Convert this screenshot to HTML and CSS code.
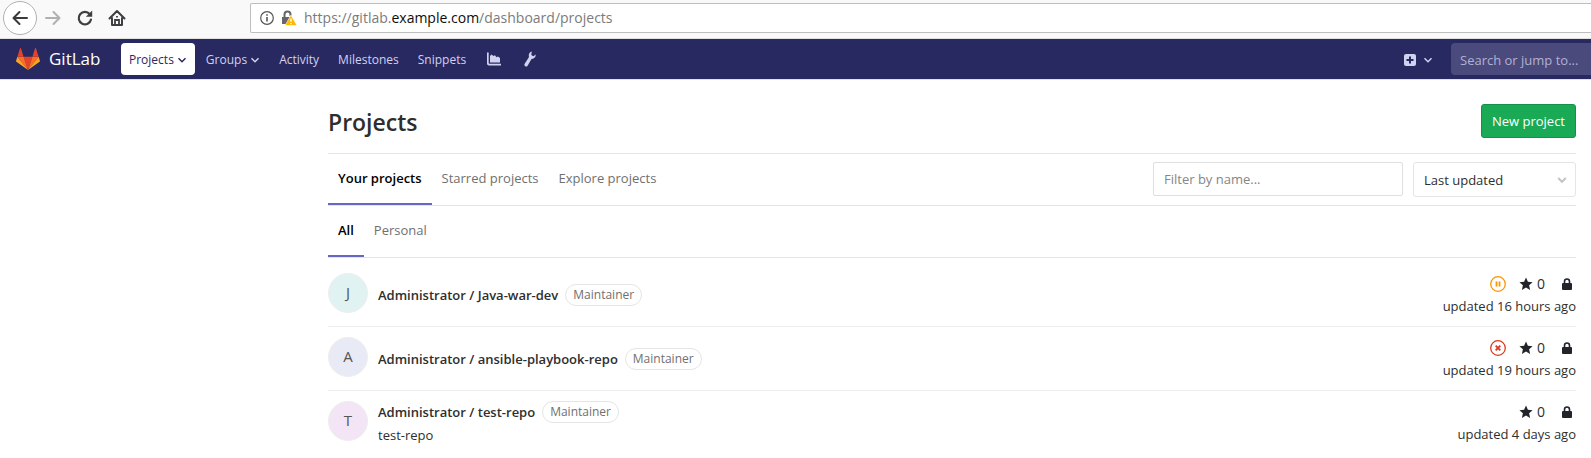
FILE: index.html
```html
<!DOCTYPE html>
<html lang="en">
<head>
<meta charset="utf-8">
<title>Projects · Dashboard · GitLab</title>
<link rel="stylesheet" href="styles.css">
</head>
<body>
<div class="browser-bar">
  <button class="browser-btn back" aria-label="Back"><svg width="18" height="18" viewBox="0 0 18 18"><path d="M16 9H3M8.500 3 2.500 9l6 6" fill="none" stroke="#3a3a3c" stroke-width="2" stroke-linecap="round" stroke-linejoin="round"/></svg></button>
  <button class="browser-btn" aria-label="Forward"><svg width="18" height="18" viewBox="0 0 18 18"><path d="M2 9h13M9.500 3l6 6-6 6" fill="none" stroke="#b0b0b1" stroke-width="2" stroke-linecap="round" stroke-linejoin="round"/></svg></button>
  <button class="browser-btn" aria-label="Reload"><svg width="18" height="18" viewBox="0 0 18 18"><path d="M13.800 5.300A6.200 6.200 0 1 0 15 10.500" fill="none" stroke="#3f3f41" stroke-width="2.200" stroke-linecap="round"/><path d="M16.200 1.500v6.300H9.900z" fill="#3f3f41"/></svg></button>
  <button class="browser-btn" aria-label="Home"><svg width="18" height="18" viewBox="0 0 18 18"><path d="M1.500 9.500 9 2l7.500 7.500M4 9v7h10V9" fill="none" stroke="#3f3f41" stroke-width="2" stroke-linecap="round" stroke-linejoin="round"/><path d="M7 16v-5h4v5M9 7v1.500" fill="none" stroke="#3f3f41" stroke-width="1.800"/></svg></button>
  <div class="address">
    <svg width="14" height="14" viewBox="0 0 14 14"><circle cx="7" cy="7" r="6.300" fill="none" stroke="#555" stroke-width="1.200"/><path d="M7 6v4.500M7 3.300v1.500" stroke="#555" stroke-width="1.600"/></svg>
    <svg width="16" height="16" viewBox="0 0 16 16"><path d="M3.500 8V4.500a3 3 0 0 1 6 0V6" fill="none" stroke="#666" stroke-width="2"/><path d="M1 7h10v7H1z" fill="#666"/><path d="M10 5 16 15.500H4z" fill="#ffb800" stroke="#fff" stroke-width=".6"/><path d="M10 8.500v3.300M10 13v1.300" stroke="#fff" stroke-width="1.400"/></svg>
    <span class="url">https://gitlab.<span class="host">example.com</span>/dashboard/projects</span>
  </div>
</div>

<header class="navbar">
  <a class="brand" href="#">
    <svg width="24" height="22" viewBox="0 0 36 33"><path fill="#e24329" d="M18 33 24.600 13H11.400z"/><path fill="#fc6d26" d="M18 33 11.400 13H2.100zM18 33l6.600-20h9.300z"/><path fill="#fca326" d="M2.100 13 .1 19.100a1.400 1.400 0 0 0 .5 1.500L18 33zM33.900 13l2 6.100a1.400 1.400 0 0 1-.5 1.500L18 33z"/><path fill="#e24329" d="M2.100 13h9.300L7.400.5a.7.7 0 0 0-1.300 0zM33.900 13h-9.300l4-12.500a.7.7 0 0 1 1.300 0z"/></svg>
    <span>GitLab</span>
  </a>
  <nav class="nav-links">
    <button class="nav-item active">Projects <svg width="10" height="10" viewBox="0 0 10 10"><path d="m1.500 3.200 3.500 3.500 3.500-3.500"/></svg></button>
    <button class="nav-item">Groups <svg width="10" height="10" viewBox="0 0 10 10"><path d="m1.500 3.200 3.500 3.500 3.500-3.500"/></svg></button>
    <a class="nav-item" href="#">Activity</a>
    <a class="nav-item" href="#">Milestones</a>
    <a class="nav-item" href="#">Snippets</a>
    <a class="nav-item icon" href="#" aria-label="Instance statistics"><svg width="14" height="14" viewBox="0 0 14 14"><path d="M0 .5h1.700v10.500a.8.800 0 0 0 .8.800H14v1.700H2A2 2 0 0 1 0 11.500zM3 10.500V4L4.500 2.500l2 1.500L8 3.200l1.500 2 1.500-.7 2 1.500v4.500z"/></svg></a>
    <a class="nav-item icon" href="#" aria-label="Admin area"><svg width="12" height="16" viewBox="0 0 12 16"><path d="M7.800.6C5.400 1.200 4.200 3.600 5 6L.7 12.800a1.700 1.700 0 0 0 2.900 1.900L7.500 8c2.500.2 4.500-1.800 4.200-4.400L9.400 5.200 7.300 4z"/></svg></a>
  </nav>
  <button class="nav-item new" aria-label="New"><svg width="12" height="12" viewBox="0 0 12 12"><rect width="12" height="12" rx="2" fill="currentColor" stroke="none"/><path d="M6 2.500v7M2.500 6h7" stroke="#292961" stroke-width="2"/></svg><svg width="10" height="10" viewBox="0 0 10 10"><path d="m1.500 3.200 3.500 3.500 3.500-3.500"/></svg></button>
  <input class="search" type="text" placeholder="Search or jump to..." aria-label="Search or jump to">
</header>

<main class="content">
  <div class="title-row">
    <h1>Projects</h1>
    <button class="new-project">New project</button>
  </div>
  <div class="tab-row">
    <nav class="tabs">
      <a class="tab active" href="#">Your projects</a>
      <a class="tab" href="#">Starred projects</a>
      <a class="tab" href="#">Explore projects</a>
    </nav>
    <div class="filters">
      <input class="filter" type="text" placeholder="Filter by name..." aria-label="Filter by name">
      <div class="sort">
        <select aria-label="Sort by"><option>Last updated</option></select>
        <svg width="10" height="8" viewBox="0 0 10 8"><path d="m1.200 2 3.800 3.800L8.800 2" fill="none" stroke="#c4c4c4" stroke-width="2"/></svg>
      </div>
    </div>
  </div>
  <div class="tab-row">
    <nav class="tabs">
      <a class="tab active" href="#">All</a>
      <a class="tab" href="#">Personal</a>
    </nav>
  </div>

  <ul class="projects">
    <li class="project">
      <div class="avatar teal">J</div>
      <div class="info"><div class="heading"><a class="name" href="#">Administrator / Java-war-dev</a><span class="role">Maintainer</span></div></div>
      <div class="meta">
        <div class="stats">
          <svg class="status" width="16" height="16" viewBox="0 0 16 16"><circle cx="8" cy="8" r="7.300" fill="none" stroke="#fc9403" stroke-width="1.300"/><path d="M6.500 5.500v5M9.500 5.500v5" stroke="#fc9403" stroke-width="1.800"/></svg>
          <span class="stars"><svg width="14" height="14" viewBox="0 0 14 14"><path fill="#212529" d="m7 .5 1.900 4.200 4.700.5-3.500 3.100 1 4.600L7 10.600l-4.100 2.300 1-4.600L.4 5.200l4.700-.5z"/></svg>0</span>
          <svg width="10" height="12" viewBox="0 0 10 12"><path d="M2.500 6V3.500a2.500 2.500 0 0 1 5 0V6" fill="none" stroke="#212529" stroke-width="1.600"/><rect y="5" width="10" height="7" rx="1" fill="#212529"/></svg>
        </div>
        <div>updated 16 hours ago</div>
      </div>
    </li>
    <li class="project">
      <div class="avatar indigo">A</div>
      <div class="info"><div class="heading"><a class="name" href="#">Administrator / ansible-playbook-repo</a><span class="role">Maintainer</span></div></div>
      <div class="meta">
        <div class="stats">
          <svg class="status" width="16" height="16" viewBox="0 0 16 16"><circle cx="8" cy="8" r="7.300" fill="none" stroke="#db3b21" stroke-width="1.300"/><path d="m5.700 5.700 4.600 4.600M10.300 5.700l-4.600 4.600" stroke="#db3b21" stroke-width="1.900"/></svg>
          <span class="stars"><svg width="14" height="14" viewBox="0 0 14 14"><path fill="#212529" d="m7 .5 1.900 4.200 4.700.5-3.500 3.100 1 4.600L7 10.600l-4.100 2.300 1-4.600L.4 5.200l4.700-.5z"/></svg>0</span>
          <svg width="10" height="12" viewBox="0 0 10 12"><path d="M2.500 6V3.500a2.500 2.500 0 0 1 5 0V6" fill="none" stroke="#212529" stroke-width="1.600"/><rect y="5" width="10" height="7" rx="1" fill="#212529"/></svg>
        </div>
        <div>updated 19 hours ago</div>
      </div>
    </li>
    <li class="project">
      <div class="avatar purple">T</div>
      <div class="info"><div class="heading"><a class="name" href="#">Administrator / test-repo</a><span class="role">Maintainer</span></div><div class="description">test-repo</div></div>
      <div class="meta">
        <div class="stats">
          <span class="stars"><svg width="14" height="14" viewBox="0 0 14 14"><path fill="#212529" d="m7 .5 1.900 4.200 4.700.5-3.500 3.100 1 4.600L7 10.600l-4.100 2.300 1-4.600L.4 5.200l4.700-.5z"/></svg>0</span>
          <svg width="10" height="12" viewBox="0 0 10 12"><path d="M2.500 6V3.500a2.500 2.500 0 0 1 5 0V6" fill="none" stroke="#212529" stroke-width="1.600"/><rect y="5" width="10" height="7" rx="1" fill="#212529"/></svg>
        </div>
        <div>updated 4 days ago</div>
      </div>
    </li>
  </ul>
</main>
</body>
</html>
```
FILE: styles.css
```css
* { box-sizing: border-box; }
body {
  margin: 0;
  background: #fff;
  color: #2e2e2e;
  font: 13px/20px "Open Sans", "Noto Sans", sans-serif;
}
button, input, select { font: inherit; color: inherit; margin: 0; }
button { border: 0; background: none; padding: 0; cursor: pointer; }
a { color: inherit; text-decoration: none; }
svg { display: block; flex: none; }

.browser-bar {
  display: flex;
  align-items: center;
  height: 39px;
  padding: 0 0 3px 3px;
  background: #f9f9fa;
  border-bottom: 1px solid #e0e0e1;
}
.browser-btn {
  display: grid;
  place-items: center;
  width: 32px;
  height: 32px;
}
.browser-btn.back {
  width: 34px;
  height: 34px;
  border: 1px solid #b1b1b3;
  border-radius: 50%;
  background: #fff;
}
.address {
  display: flex;
  flex: 1;
  align-items: center;
  gap: 7px;
  height: 30px;
  margin-left: 117px;
  padding-left: 9px;
  border: 1px solid #bebebe;
  border-right: 0;
  border-radius: 2px 0 0 2px;
  background: #fff;
}
.url { font-size: 14px; color: #7b7b7b; }
.host { color: #0c0c0d; }

.navbar {
  display: flex;
  align-items: center;
  height: 41px;
  padding-left: 16px;
  background: #292961;
  border-bottom: 1px solid #dfdfe8;
  color: #d1d1f0;
}
.brand {
  display: flex;
  align-items: center;
  gap: 9px;
  width: 105px;
  color: #fff;
  font-size: 17px;
}
.nav-links { display: flex; flex: 1; gap: 3px; }
.nav-item {
  display: flex;
  align-items: center;
  gap: 3px;
  height: 32px;
  padding: 1px 8px 0;
  border-radius: 4px;
  font-size: 12px;
}
.nav-item path { fill: none; stroke: currentColor; stroke-width: 1.500; }
.nav-item.active { background: #fff; color: #292961; }
.nav-item.icon { padding: 0 10px; }
.nav-item.icon path { fill: currentColor; stroke: none; }
.nav-item.new { gap: 7px; margin-right: 10px; }
.nav-item.new rect + path { stroke: #292961; stroke-width: 2; }
.search {
  width: 140px;
  height: 32px;
  padding: 1px 0 0 9px;
  border: 0;
  border-radius: 4px 0 0 4px;
  background: #4a4a7c;
  color: #fff;
}
.search::placeholder { color: #b1b1d4; opacity: 1; }

.content { padding: 24px 15px 0 328px; }
.title-row {
  display: flex;
  justify-content: space-between;
  align-items: flex-start;
  height: 50px;
  border-bottom: 1px solid #e5e5e5;
}
h1 { margin: 0; font-size: 23px; line-height: 36px; font-weight: 600; }
.new-project {
  height: 34px;
  padding: 0 10px;
  border: 1px solid #168f48;
  border-radius: 3px;
  background: #1aaa55;
  color: #fff;
}
.tab-row {
  display: flex;
  justify-content: space-between;
  align-items: flex-start;
  height: 52px;
  border-bottom: 1px solid #e5e5e5;
}
.tabs { display: flex; }
.tab {
  height: 51px;
  padding: 14px 10px 0;
  color: #707070;
}
.tab.active { border-bottom: 2px solid #6666c4; color: #000; font-weight: 600; }
.filters { display: flex; align-items: flex-start; gap: 10px; padding-top: 8px; }
.filter {
  width: 250px;
  height: 34px;
  padding: 0 10px;
  border: 1px solid #dfdfdf;
  border-radius: 2px;
}
.filter::placeholder { color: #868686; opacity: 1; }
.sort { display: grid; align-items: center; }
.sort select, .sort svg { grid-area: 1 / 1; }
.sort select {
  width: 163px;
  height: 35px;
  padding: 0 10px;
  appearance: none;
  border: 1px solid #e5e5e5;
  border-radius: 3px;
  background: #fff;
}
.sort svg { justify-self: end; margin-right: 9px; pointer-events: none; }

.projects { margin: 5px 0 0; padding: 0; list-style: none; }
.project {
  display: flex;
  align-items: center;
  gap: 10px;
  height: 64px;
  padding-bottom: 3px;
  border-bottom: 1px solid #eee;
}
.project:last-child { border-bottom-color: transparent; }
.avatar {
  width: 40px;
  height: 40px;
  border: 1px solid #eee;
  border-radius: 50%;
  text-align: center;
  font-size: 15px;
  line-height: 37px;
  color: #555;
}
.teal { background: #e0f2f1; }
.indigo { background: #e8eaf6; }
.purple { background: #f3e5f5; }
.info { flex: 1; padding-top: 3px; }
.heading { display: flex; align-items: center; gap: 7px; }
.description { margin-top: 2px; }
.name { font-weight: 600; }
.role {
  height: 22px;
  padding: 0 7px;
  border: 1px solid #e5e5e5;
  border-radius: 11px;
  font-size: 12px;
  color: #707070;
}
.meta { padding-top: 3px; text-align: right; line-height: 22px; }
.stats { display: flex; align-items: center; justify-content: flex-end; gap: 17px; padding-right: 4px; }
.status { margin-right: -4px; }
.stars { display: flex; align-items: center; gap: 4px; font-size: 14px; }
```
